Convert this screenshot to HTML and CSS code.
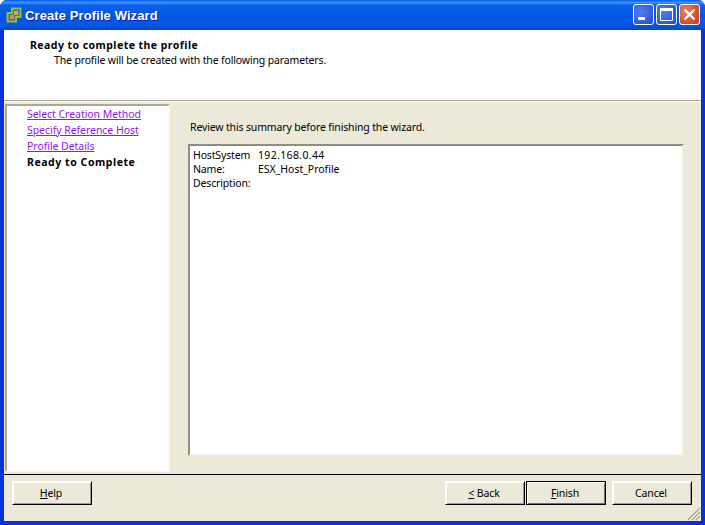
FILE: index.html
```html
<!DOCTYPE html>
<html lang="en">
<head>
<meta charset="utf-8">
<title>Create Profile Wizard</title>
<link rel="stylesheet" href="styles.css">
</head>
<body>
<div class="window">
  <div class="titlebar">
    <svg class="app-icon" width="16" height="16" viewBox="0 0 16 16">
      <path d="M6 1.500h8.500v8.500h-4.500v4.500h-8.500v-8.500h4.500z" fill="#2f6fd0" stroke="#8fc31f" stroke-width="2"/>
      <rect x="8" y="4" width="4" height="4" fill="#f5a623"/>
      <rect x="4" y="8" width="4" height="4" fill="#f08c10"/>
    </svg>
    <span class="title">Create Profile Wizard</span>
    <div class="controls">
      <div class="ctl ctl-blue">
        <svg width="21" height="21" viewBox="0 0 21 21"><rect x="5" y="13" width="7" height="3" fill="#fff"/></svg>
      </div>
      <div class="ctl ctl-blue">
        <svg width="21" height="21" viewBox="0 0 21 21"><path d="M4.500 4.500h12v12h-12z" fill="none" stroke="#fff"/><rect x="4" y="4" width="13" height="3" fill="#fff"/></svg>
      </div>
      <div class="ctl ctl-red">
        <svg width="21" height="21" viewBox="0 0 21 21"><path d="M5.500 5.500l10 10M15.500 5.500l-10 10" stroke="#fff" stroke-width="2.200" fill="none"/></svg>
      </div>
    </div>
  </div>
  <div class="client">
    <header class="head">
      <div class="head-title">Ready to complete the profile</div>
      <div class="head-sub">The profile will be created with the following parameters.</div>
    </header>
    <div class="main">
      <nav class="steps">
        <a class="step" href="#">Select Creation Method</a>
        <a class="step" href="#">Specify Reference Host</a>
        <a class="step" href="#">Profile Details</a>
        <span class="step current">Ready to Complete</span>
      </nav>
      <section class="content">
        <p class="lead">Review this summary before finishing the wizard.</p>
        <div class="summary">
          <div class="row"><span class="key">HostSystem</span><span class="ip">192.168.0.44</span></div>
          <div class="row"><span class="key">Name:</span><span class="val">ESX_Host_Profile</span></div>
          <div class="row"><span class="key">Description:</span></div>
        </div>
      </section>
    </div>
    <footer class="foot">
      <button class="btn" type="button"><u>H</u>elp</button>
      <div class="foot-right">
        <button class="btn" type="button"><u>&lt;</u> Back</button>
        <button class="btn btn-default" type="button"><u>F</u>inish</button>
        <button class="btn btn-cancel" type="button">Cancel</button>
      </div>
      <svg class="grip" width="14" height="14" viewBox="0 0 14 14">
        <path d="M13 1L1 13M13 5L5 13M13 9L9 13" stroke="#a5a297" stroke-width="1.400"/>
        <path d="M13 3L3 13M13 7L7 13M13 11L11 13" stroke="#fff" stroke-width="1"/>
      </svg>
    </footer>
  </div>
</div>
</body>
</html>
```
FILE: styles.css
```css
* { box-sizing: border-box; }
html, body { margin: 0; padding: 0; }
body { width: 705px; height: 525px; overflow: hidden; font-family: "Noto Sans", "Liberation Sans", sans-serif; font-size: 10.500px; letter-spacing: -0.150px; color: #000; }
.window { width: 705px; height: 525px; display: flex; flex-direction: column; background: #0831d9; border-radius: 7px 7px 0 0; }
.titlebar { height: 30px; flex: none; display: flex; align-items: center; padding: 0 5px 0 6px; border-radius: 7px 7px 0 0;
  background: linear-gradient(180deg, #0058ee 0%, #3a93ff 8%, #0a5fe8 18%, #0355e3 55%, #0359ea 80%, #0348c8 100%); }
.app-icon { flex: none; }
.title { margin-left: 3px; color: #fff; font-family: "Liberation Sans", sans-serif; font-weight: bold; font-size: 13px; letter-spacing: 0.100px; text-shadow: 1px 1px 0 #0f1fa0; flex: 1; }
.controls { display: flex; gap: 2px; margin-bottom: 1px; }
.ctl { width: 21px; height: 21px; border: 1px solid #fff; border-radius: 3px; overflow: hidden; }
.ctl svg { display: block; margin: -1px; }
.ctl-blue { background: radial-gradient(circle at 35% 35%, #4f7df0 0%, #3c66e0 50%, #2346c0 100%); }
.ctl-red { background: radial-gradient(circle at 35% 35%, #ea8560 0%, #dd5a30 50%, #c23a16 100%); }
.client { flex: 1; min-height: 0; display: flex; flex-direction: column; margin: 0 4px 4px; background: #ece9d8; }
.head { height: 70px; flex: none; background: #fff; padding: 8px 0 0 26px; }
.head-title { font-weight: bold; letter-spacing: 0.450px; line-height: 14px; }
.head-sub { padding-left: 24px; line-height: 16px; }
.main { flex: 1; min-height: 0; display: flex; border-top: 1px solid #aca899; box-shadow: inset 0 1px 0 #fff; padding-top: 2px; }
.steps { width: 165px; margin: 1px 0 2px 1px; flex: none; background: #fff; border: 2px solid; border-color: #aca899 #f8f7f0 #f8f7f0 #aca899; padding: 0 0 0 20px; display: flex; flex-direction: column; }
.step { display: block; line-height: 16px; height: 16px; white-space: nowrap; }
a.step { color: #8b18f0; text-decoration: underline; letter-spacing: -0.050px; }
.current { font-weight: bold; letter-spacing: 0.550px; color: #000; }
.content { flex: 1; min-width: 0; display: flex; flex-direction: column; padding: 0 17px 18px 18px; }
.lead { margin: 16px 0 9px 2px; line-height: 16px; }
.summary { flex: 1; background: #fff; border: 2px solid; border-color: #8f8d82 #f1efe2 #f1efe2 #8f8d82; padding: 2px 0 0 3px; }
.row { display: flex; line-height: 14px; height: 14px; }
.key { width: 65px; flex: none; }
.ip { letter-spacing: 0.350px; }
.val { letter-spacing: -0.020px; }
.foot { height: 47px; flex: none; position: relative; display: flex; justify-content: space-between; border-top: 1px solid #000; padding: 6px 9px 0 8px; }
.foot-right { display: flex; }
.btn { width: 80px; height: 24px; padding: 0 2px 0 0; font: inherit; letter-spacing: inherit; color: #000; background: #ece9d8; border: 1px solid; border-color: #fff #000 #000 #fff; box-shadow: inset 1px 1px 0 #fff, inset -1px -1px 0 #9d9a8b; outline: 0; }
.btn-default { margin-left: 1px; border-color: #000; box-shadow: inset 1px 1px 0 #fff, inset -1px -1px 0 #716f64; }
.btn-cancel { margin-left: 6px; }
.grip { position: absolute; right: 0; bottom: 0; }
```
